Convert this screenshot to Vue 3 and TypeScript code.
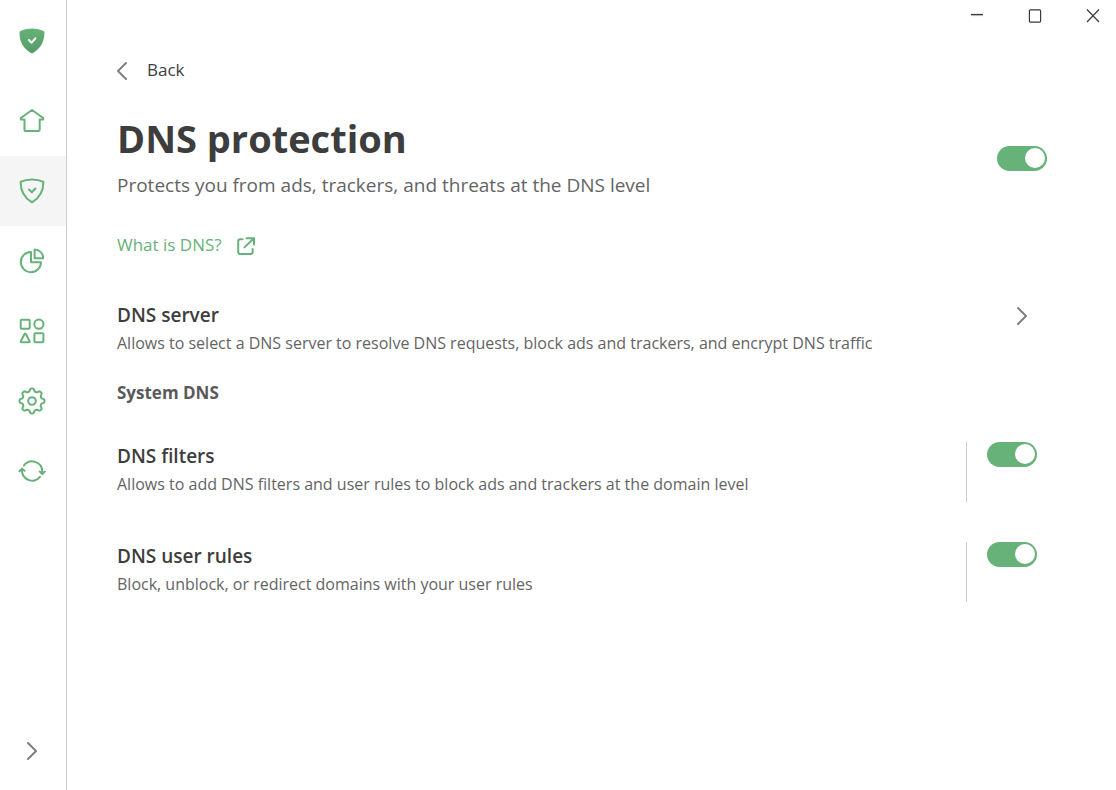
<script setup lang="ts">
import { ref } from 'vue'

interface NavItem {
  id: string
  label: string
}

const navItems: NavItem[] = [
  { id: 'home', label: 'Home' },
  { id: 'protection', label: 'Protection' },
  { id: 'statistics', label: 'Statistics' },
  { id: 'apps', label: 'Apps' },
  { id: 'settings', label: 'Settings' },
  { id: 'updates', label: 'Updates' },
]

const active = ref('protection')
const dnsEnabled = ref(true)

const rules = ref([
  {
    id: 'filters',
    title: 'DNS filters',
    text: 'Allows to add DNS filters and user rules to block ads and trackers at the domain level',
    on: true,
  },
  {
    id: 'user-rules',
    title: 'DNS user rules',
    text: 'Block, unblock, or redirect domains with your user rules',
    on: true,
  },
])

// Outline of an eight-toothed gear around (14, 14).
function gearPath(): string {
  const points: string[] = []
  for (let i = 0; i < 96; i++) {
    const angle = (i / 96) * Math.PI * 2
    const wave = Math.tanh(1.8 * Math.cos(angle * 8)) / Math.tanh(1.8)
    const radius = 11.1 + 1.4 * wave
    points.push(`${(14 + radius * Math.cos(angle)).toFixed(2)} ${(14 + radius * Math.sin(angle)).toFixed(2)}`)
  }
  return `M${points.join('L')}Z`
}
const gear = gearPath()
</script>

<template>
  <div class="window">
    <aside class="sidebar">
      <div class="logo">
        <svg class="icon" viewBox="0 0 28 28" aria-hidden="true">
          <defs>
            <linearGradient id="logo-fill" x1="0" y1="0" x2="0" y2="1">
              <stop offset="0" stop-color="#67b279" />
              <stop offset="1" stop-color="#559a66" />
            </linearGradient>
          </defs>
          <path d="M14 1.4C9.8 1.4 5 2.4 1.6 4.4C1.6 8.9 1.3 19.3 14 26.6C26.7 19.3 26.4 8.9 26.4 4.4C23 2.4 18.2 1.4 14 1.4Z" fill="url(#logo-fill)" />
          <path d="M10.8 13L13.6 15.7L17.4 11.3" class="logo-tick" />
        </svg>
      </div>
      <nav class="nav" aria-label="Main">
        <button
          v-for="item in navItems"
          :key="item.id"
          type="button"
          class="nav-item"
          :class="{ active: active === item.id }"
          :aria-label="item.label"
          @click="active = item.id"
        >
          <svg class="icon line" viewBox="0 0 28 28" aria-hidden="true">
            <path v-if="item.id === 'home'" d="M14 3L25.2 11V12.6H21.7V23L20.9 24H7.1L6.5 23.3V12.6H2.8V11Z" />
            <template v-else-if="item.id === 'protection'">
              <path d="M14 2.4C10 2.4 6 3.1 2.6 4.9C2.6 9.2 2.8 18.8 14 25.3C25.2 18.8 25.4 9.2 25.4 4.9C22 3.1 18 2.4 14 2.4Z" />
              <path d="M11 12.4L13.8 15.3L17.4 11.5" />
            </template>
            <template v-else-if="item.id === 'statistics'">
              <path d="M13 5A10.1 10.1 0 1 0 23 15.2H13Z" />
              <path d="M16.6 2.6V11.2H25.2A8.6 8.6 0 0 0 16.6 2.6Z" />
            </template>
            <template v-else-if="item.id === 'apps'">
              <rect x="2.7" y="2.7" width="9" height="9" rx="1" />
              <circle cx="20.9" cy="7.2" r="4.6" />
              <path d="M6.5 17L2.9 24Q2.5 25.2 3.6 25.3H10.8Q12 25.2 11.5 24L7.9 17Q7.2 16 6.5 17Z" />
              <rect x="16.4" y="16.3" width="9" height="9" rx="1" />
            </template>
            <template v-else-if="item.id === 'settings'">
              <path :d="gear" />
              <circle cx="14" cy="14" r="3.8" />
            </template>
            <template v-else>
              <path d="M6 8.4A10.2 10.2 0 0 1 24.3 14.2V16.8M21.7 14.6L24.3 17L26.8 14.6" />
              <path d="M22 19.9A10.2 10.2 0 0 1 4 14.2V11.8M1.4 14.2L4 11.8L6.6 13.8" />
            </template>
          </svg>
        </button>
      </nav>
      <button type="button" class="nav-item expand" aria-label="Expand menu">
        <svg class="icon chevron" viewBox="0 0 28 28" aria-hidden="true"><path d="M10 6L18 14L10 22" /></svg>
      </button>
    </aside>

    <main class="main">
      <header class="titlebar">
        <button type="button" aria-label="Minimize">
          <svg viewBox="0 0 14 14" aria-hidden="true"><path d="M1 6.5H13" class="faint" /><path d="M1 5.5H13" /></svg>
        </button>
        <button type="button" aria-label="Maximize">
          <svg viewBox="0 0 14 14" aria-hidden="true"><rect x="1.4" y="0.9" width="11.2" height="12.2" rx="1" /></svg>
        </button>
        <button type="button" aria-label="Close">
          <svg viewBox="0 0 14 14" aria-hidden="true"><path d="M1 0.5L13 13M13 0.5L1 13" /></svg>
        </button>
      </header>

      <div class="content">
        <a href="#" class="back">
          <svg class="chevron" viewBox="0 0 10 18" aria-hidden="true"><path d="M9 1L1 9L9 17" /></svg>
          <span>Back</span>
        </a>

        <section class="heading">
          <div class="grow">
            <h1 id="page-title">DNS protection</h1>
            <p class="lead">Protects you from ads, trackers, and threats at the DNS level</p>
          </div>
          <input v-model="dnsEnabled" type="checkbox" role="switch" class="toggle" aria-labelledby="page-title" />
        </section>

        <a href="#" class="help">
          <span>What is DNS?</span>
          <svg viewBox="0 0 20 20" aria-hidden="true">
            <path d="M6.5 3.2H4.2Q2.2 3.2 2.2 5.2V16Q2.2 18 4.2 18H14.6Q16.6 18 16.6 16V13" />
            <path d="M10.5 2.2H18V8.4M18 2.2L8.4 11.4" />
          </svg>
        </a>

        <a href="#" class="row server">
          <span class="grow">
            <span class="row-title">DNS server</span>
            <span class="row-text">Allows to select a DNS server to resolve DNS requests, block ads and trackers, and encrypt DNS traffic</span>
            <strong class="current">System DNS</strong>
          </span>
          <svg class="chevron" viewBox="0 0 10 18" aria-hidden="true"><path d="M1 1L9 9L1 17" /></svg>
        </a>

        <section v-for="rule in rules" :key="rule.id" class="row rule">
          <label class="grow" :for="rule.id">
            <span class="row-title">{{ rule.title }}</span>
            <span class="row-text">{{ rule.text }}</span>
          </label>
          <div class="switch-cell">
            <input :id="rule.id" v-model="rule.on" type="checkbox" role="switch" class="toggle" />
          </div>
        </section>
      </div>
    </main>
  </div>
</template>

<style>
body {
  margin: 0;
  background: #fff;
}
</style>

<style scoped>
.window {
  display: flex;
  min-height: 100vh;
  font-family: "Open Sans", "Noto Sans", sans-serif;
  color: #3d3d3d;
  background: #fff;
}
button {
  border: 0;
  padding: 0;
  background: none;
  font: inherit;
  color: inherit;
}
a {
  color: inherit;
  text-decoration: none;
}
svg {
  display: block;
  flex: none;
  fill: none;
}
.sidebar {
  display: flex;
  flex-direction: column;
  flex: none;
  width: 66px;
  border-right: 1px solid #cdcdcd;
}
.icon {
  width: 28px;
  height: 28px;
}
.logo {
  padding: 27px 18px 31px;
}
.logo-tick {
  stroke: #fff;
  stroke-width: 2;
  stroke-linecap: round;
  stroke-linejoin: round;
}
.nav {
  display: flex;
  flex-direction: column;
}
.nav-item {
  display: flex;
  align-items: center;
  height: 70px;
  padding: 0 18px;
}
.nav-item.active {
  background: #f5f5f5;
}
.line {
  stroke: #67b279;
  stroke-width: 2;
  stroke-linecap: round;
  stroke-linejoin: round;
}
.expand {
  margin-top: auto;
  margin-bottom: 4px;
}
.chevron {
  stroke: #7f7f7f;
  stroke-width: 2;
  stroke-linecap: round;
  stroke-linejoin: round;
  overflow: visible;
}
.main {
  flex: 1;
  min-width: 0;
}
.titlebar {
  display: flex;
  justify-content: flex-end;
  height: 32px;
}
.titlebar button {
  display: grid;
  place-items: center;
  width: 58px;
}
.titlebar button:last-child {
  box-sizing: border-box;
  width: 52px;
  padding-left: 6px;
}
.titlebar svg {
  width: 14px;
  height: 14px;
  stroke: #3a3a3a;
  stroke-width: 1.2;
}
.titlebar .faint {
  stroke: #c8c8c8;
}
.content {
  padding: 24px 69px 40px 50px;
}
.back,
.help {
  display: flex;
  align-items: center;
  width: fit-content;
  font-size: 17px;
}
.back span,
.help span {
  align-self: flex-start;
}
.back {
  gap: 20px;
  height: 30px;
  line-height: 28px;
}
.back .chevron,
.server .chevron {
  width: 10px;
  height: 18px;
}
.heading {
  display: flex;
  align-items: flex-start;
  margin-top: 26px;
}
.heading .toggle {
  margin-top: 34px;
}
.grow {
  flex: 1;
  min-width: 0;
}
h1 {
  margin: 0;
  font-size: 38px;
  line-height: 52px;
  font-weight: 700;
}
.lead {
  margin: 7px 0 0;
  font-size: 19px;
  line-height: 28px;
  color: #646464;
}
.toggle {
  appearance: none;
  display: flex;
  flex: none;
  align-items: flex-start;
  width: 50px;
  height: 25px;
  margin: 0;
  padding: 2px;
  box-sizing: border-box;
  border-radius: 13px;
  background: #b0b0b0;
}
.toggle::before {
  content: "";
  width: 20px;
  height: 20px;
  border-radius: 50%;
  background: #fff;
}
.toggle:checked {
  justify-content: flex-end;
  background: #67b279;
}
.help {
  gap: 14px;
  height: 32px;
  margin-top: 31px;
  line-height: 30px;
  color: #67b279;
}
.help svg {
  width: 20px;
  height: 20px;
  stroke: #67b279;
  stroke-width: 2;
  stroke-linecap: round;
  stroke-linejoin: round;
}
.row {
  display: flex;
  align-items: flex-start;
}
.server {
  margin-top: 39px;
  padding-right: 20px;
}
.server .chevron {
  margin-top: 6px;
}
.row-title,
.row-text,
.current {
  display: block;
  line-height: 28px;
}
.row-title {
  font-size: 19px;
  font-weight: 600;
}
.row-text {
  font-size: 16px;
  color: #646464;
}
.current {
  margin-top: 22px;
  font-size: 17px;
  font-weight: 700;
  color: #5a5a5a;
}
.rule {
  margin-top: 40px;
  padding-right: 10px;
}
.server + .rule {
  margin-top: 35px;
}
.switch-cell {
  height: 60px;
  padding-left: 20px;
  border-left: 1px solid #cdcdcd;
}
</style>
